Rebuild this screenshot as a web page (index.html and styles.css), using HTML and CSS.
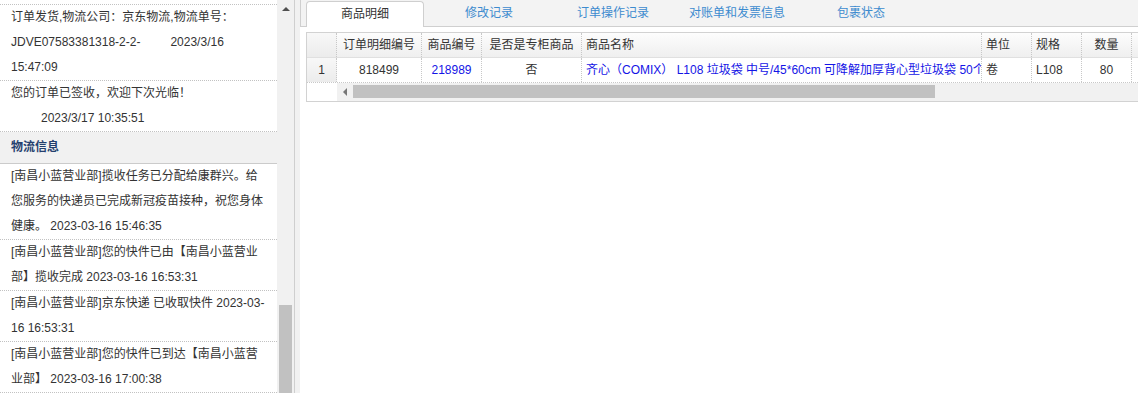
FILE: index.html
```html
<!doctype html>
<html lang="zh-CN">
<head>
  <meta charset="utf-8">
  <title>订单详情</title>
  <meta name="viewport" content="width=device-width,initial-scale=1">
  <link rel="stylesheet" href="styles.css">
</head>
<body>
<div class="page">

  <!-- Left: order + logistics log -->
  <aside class="side">
    <div class="side-body">
      <ul class="log log-first">
        <li>订单发货,物流公司：京东物流,物流单号：<br>JDVE07583381318-2-2-<span class="time">2023/3/16</span><br>15:47:09</li>
        <li>您的订单已签收，欢迎下次光临！<br><span class="time">2023/3/17 10:35:51</span></li>
      </ul>
      <h3 class="side-title">物流信息</h3>
      <ul class="log">
        <li>[南昌小蓝营业部]揽收任务已分配给康群兴。给<br>您服务的快递员已完成新冠疫苗接种，祝您身体<br>健康。 2023-03-16 15:46:35</li>
        <li>[南昌小蓝营业部]您的快件已由【南昌小蓝营业<br>部】揽收完成 2023-03-16 16:53:31</li>
        <li>[南昌小蓝营业部]京东快递 已收取快件 2023-03-<br>16 16:53:31</li>
        <li>[南昌小蓝营业部]您的快件已到达【南昌小蓝营<br>业部】 2023-03-16 17:00:38</li>
      </ul>
    </div>
    <div class="vscroll">
      <span class="vscroll-up"></span>
      <span class="vscroll-track"><span class="vscroll-thumb"></span></span>
    </div>
  </aside>

  <!-- Right: tabs + detail grid -->
  <main class="main">
    <nav class="tabs">
      <a class="tab active">商品明细</a>
      <a class="tab">修改记录</a>
      <a class="tab">订单操作记录</a>
      <a class="tab">对账单和发票信息</a>
      <a class="tab">包裹状态</a>
    </nav>

    <div class="grid">
      <div class="row head">
        <span class="cell rn"></span>
        <span class="cell c">订单明细编号</span>
        <span class="cell c">商品编号</span>
        <span class="cell c">是否是专柜商品</span>
        <span class="cell">商品名称</span>
        <span class="cell">单位</span>
        <span class="cell">规格</span>
        <span class="cell c">数量</span>
        <span class="cell"></span>
      </div>
      <div class="row body">
        <span class="cell rn">1</span>
        <span class="cell c">818499</span>
        <span class="cell c link">218989</span>
        <span class="cell c">否</span>
        <span class="cell link">齐心（COMIX） L108 垃圾袋 中号/45*60cm 可降解加厚背心型垃圾袋 50个</span>
        <span class="cell">卷</span>
        <span class="cell">L108</span>
        <span class="cell c">80</span>
        <span class="cell"></span>
      </div>
      <div class="hscroll">
        <span class="hscroll-pad"></span>
        <span class="hscroll-left"></span>
        <span class="hscroll-thumb"></span>
      </div>
    </div>
  </main>

</div>
</body>
</html>
```

FILE: styles.css
```css
/* ---------- Base ---------- */
*,*::before,*::after{box-sizing:border-box}
body{margin:0;background:#fff;color:#333;
     font:12px/1.5 "Liberation Sans",Arial,"Noto Sans CJK SC",sans-serif;
     overflow:hidden}
ul{margin:0;padding:0;list-style:none}
h3{margin:0}

.page{display:flex;height:100vh;overflow:hidden}

/* ---------- Side panel ---------- */
.side{display:flex;flex:none;width:295px;border-right:1px solid #cfcfcf}
.side-body{width:277px;overflow:hidden}

.log li{padding:0 11px;line-height:25px;border-bottom:1px dotted #c2c2c2;white-space:nowrap}
.log-first{margin-top:4px;border-top:1px dotted #c2c2c2}
.time{margin-left:30px}

.side-title{height:32px;padding-left:11px;line-height:31px;font-size:12px;
            background:#f1f1f1;color:#24406e;border-bottom:1px solid #cbcbcb}

.vscroll{display:flex;flex-direction:column;width:17px;background:#f1f1f1}
.vscroll-up{height:17px;display:flex;align-items:center;justify-content:center}
.vscroll-up::before{content:"";border:4px solid transparent;border-top:0;border-bottom:4px solid #505050}
.vscroll-track{flex:1;display:flex;flex-direction:column;justify-content:flex-end;padding:0 2px}
.vscroll-thumb{height:88px;background:#c1c1c1}

/* ---------- Main ---------- */
.main{flex:1;min-width:0;border-left:5px solid #f1f1f1;padding-left:6px}

.tabs{display:flex;align-items:flex-end;height:27px;margin-left:-6px;padding-left:5px;
      background:#f3f3f3;border-left:1px solid #cfcfcf;border-bottom:1px solid #cfcfcf}
.tab{width:118px;margin-right:6px;height:26px;margin-bottom:-1px;
     line-height:24px;text-align:center;color:#3d8bcf;cursor:pointer}
.tab.active{background:#fff;color:#333;border:1px solid #cfcfcf;border-bottom:0;border-radius:4px 4px 0 0}

/* ---------- Grid ---------- */
.grid{margin-top:5px;border:1px solid #d2d2d2;border-right:0;overflow:hidden}
.row{display:grid;grid-template-columns:30px 85px 60px 100px 400px 50px 50px 50px 120px;height:25px}
.row.head{background:linear-gradient(#fdfdfd,#efefef);border-bottom:1px solid #e0e0e0}
.row.body{border-bottom:1px dotted #c8c8c8}
.row .cell{line-height:24px}

.cell{padding:0 4px;border-right:1px dotted #c8c8c8;white-space:nowrap;overflow:hidden}
.cell.c{text-align:center}
.cell.rn{text-align:center;background:linear-gradient(#f8f8f8,#ececec)}
.link{color:#1414e6}

.hscroll{display:flex;height:18px}
.hscroll-pad{width:30px;background:#fff}
.hscroll-left{width:16px;background:#f1f1f1;display:flex;align-items:center;justify-content:center}
.hscroll-left::before{content:"";border:4px solid transparent;border-left:0;border-right:4px solid #777}
.hscroll-thumb{flex:1;background:#f1f1f1;padding:2px 0}
.hscroll-thumb::before{content:"";display:block;width:582px;height:13px;background:#c1c1c1}
```
